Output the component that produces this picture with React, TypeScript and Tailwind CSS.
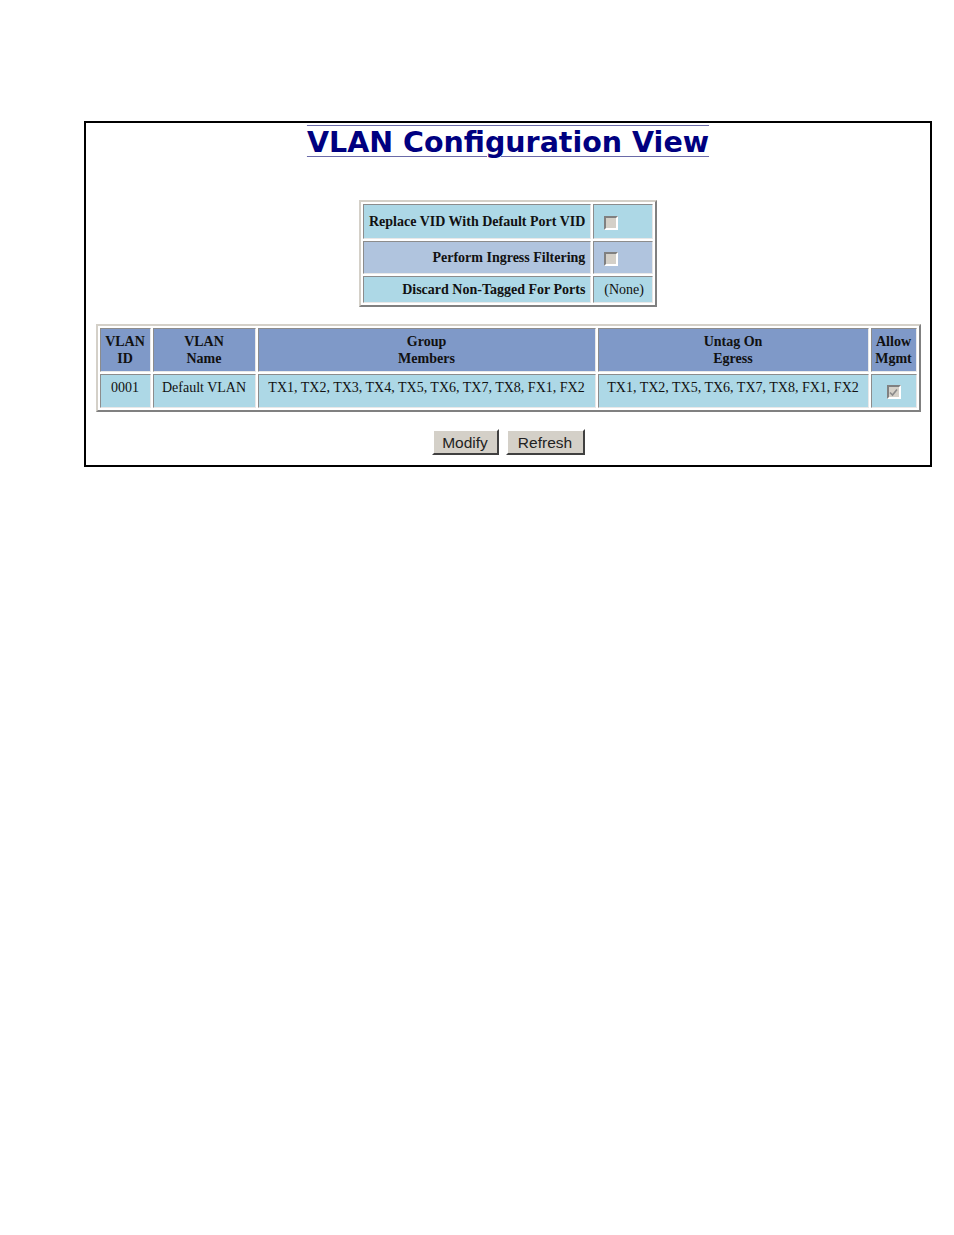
import React from "react";

const serif = "font-['Liberation_Serif','Times_New_Roman',serif]";

function Box({ checked = false }: { checked?: boolean }) {
  return (
    <span className="inline-flex h-[14px] w-[14px] items-center justify-center border-2 border-t-[#808080] border-l-[#808080] border-b-white border-r-white bg-[#d4d0c8] align-middle">
      {checked && (
        <svg width="9" height="9" viewBox="0 0 9 9">
          <path d="M1 4.5 L3.5 7 L8 1.5" fill="none" stroke="#8a8a8a" strokeWidth="1.6" />
        </svg>
      )}
    </span>
  );
}

const td =
  "border border-t-[#8c8c8c] border-l-[#8c8c8c] border-b-[#e8e8e8] border-r-[#e8e8e8]";
const tableCls =
  "border-separate border-spacing-[2px] border-2 border-t-[#d4d0c8] border-l-[#d4d0c8] border-b-[#808080] border-r-[#808080]";

function Btn({ label, w }: { label: string; w: string }) {
  return (
    <button className={`${w} h-[26px] border-2 border-t-white border-l-white border-b-[#404040] border-r-[#404040] bg-[#d4d0c8] font-['Liberation_Sans',Arial,sans-serif] text-[15.5px] text-[#222]`}>
      {label}
    </button>
  );
}

export default function App() {
  const opts = [
    { label: "Replace VID With Default Port VID", bg: "bg-[#add8e6]", h: "h-[35px]", v: <Box /> },
    { label: "Perform Ingress Filtering", bg: "bg-[#b0c4de]", h: "h-[33px]", v: <Box /> },
    { label: "Discard Non-Tagged For Ports", bg: "bg-[#add8e6]", h: "h-[27px]", v: <span>(None)</span> },
  ];

  return (
    <div className="bg-white pt-[121px]">
      <div className="ml-[84px] w-[848px] border-2 border-black pb-[10px]">
        <div className="flex justify-center pt-[4px]">
          <a className="font-['DejaVu_Sans',Verdana,sans-serif] text-[28.5px] font-bold leading-[32px] text-[#000080] [text-decoration-line:underline_overline] decoration-[#6a6aa8] decoration-1 underline-offset-[4px]">
            VLAN Configuration View
          </a>
        </div>

        <div className="mt-[41px] flex justify-center">
          <table className={`${tableCls} ${serif} text-[14px] text-[#111]`}>
            <tbody>
              {opts.map((o) => (
                <tr key={o.label} className={o.bg}>
                  <td className={`${td} ${o.h} px-[5px] text-right font-bold`}>{o.label}</td>
                  <td className={`${td} pl-[10px] pr-[8px] text-left`}>{o.v}</td>
                </tr>
              ))}
            </tbody>
          </table>
        </div>

        <div className="mt-[17px] flex justify-center">
          <table className={`${tableCls} ${serif} w-[825px] text-center text-[14px] text-[#111]`}>
            <thead>
              <tr className="bg-[#7f99c8] font-bold leading-[17px]">
                <td className={`${td} h-[44px] w-[51px]`}>VLAN<br />ID</td>
                <td className={`${td} w-[103px]`}>VLAN<br />Name</td>
                <td className={td}>Group<br />Members</td>
                <td className={`${td} w-[271px]`}>Untag On<br />Egress</td>
                <td className={`${td} w-[46px]`}>Allow<br />Mgmt</td>
              </tr>
            </thead>
            <tbody>
              <tr className="bg-[#add8e6]">
                <td className={`${td} h-[34px] pb-[8px]`}>0001</td>
                <td className={`${td} pb-[8px] whitespace-nowrap`}>Default VLAN</td>
                <td className={`${td} pb-[8px] whitespace-nowrap`}>TX1, TX2, TX3, TX4, TX5, TX6, TX7, TX8, FX1, FX2</td>
                <td className={`${td} pb-[8px] whitespace-nowrap`}>TX1, TX2, TX5, TX6, TX7, TX8, FX1, FX2</td>
                <td className={td}><Box checked /></td>
              </tr>
            </tbody>
          </table>
        </div>

        <div className="mt-[17px] flex justify-center gap-[7px]">
          <Btn label="Modify" w="w-[67px]" />
          <Btn label="Refresh" w="w-[79px]" />
        </div>
      </div>
    </div>
  );
}
